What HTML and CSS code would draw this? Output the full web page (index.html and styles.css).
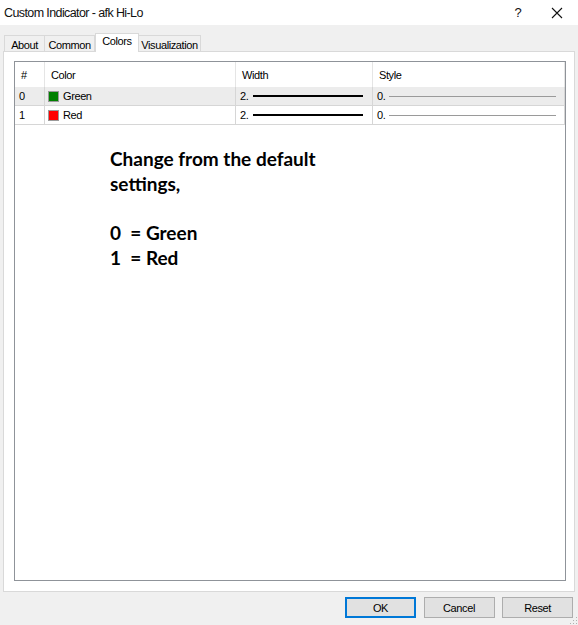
FILE: index.html
```html
<!DOCTYPE html>
<html lang="en">
<head>
    <meta charset="UTF-8">
    <title>Custom Indicator - afk Hi-Lo</title>
    <link rel="stylesheet" href="styles.css">
</head>
<body>
    <div class="window">
        <div class="titlebar">
            <span class="title">Custom Indicator - afk Hi-Lo</span>
            <span class="help">?</span>
            <span class="close">
                <svg width="12" height="12" viewBox="0 0 12 12"><path d="M1 1 L11 11 M11 1 L1 11" stroke="#111" stroke-width="1.1" fill="none"/></svg>
            </span>
        </div>

        <div class="client">
            <div class="tabs">
                <div class="tab tab-about">About</div>
                <div class="tab tab-common">Common</div>
                <div class="tab tab-colors active">Colors</div>
                <div class="tab tab-vis">Visualization</div>
            </div>

            <div class="panel">
                <div class="list">
                    <div class="row head">
                        <div class="cell">#</div>
                        <div class="cell">Color</div>
                        <div class="cell">Width</div>
                        <div class="cell">Style</div>
                    </div>
                    <div class="row selected">
                        <div class="cell num">0</div>
                        <div class="cell color"><span class="swatch green"></span>Green</div>
                        <div class="cell"><span class="val">2.</span><span class="line thick"></span></div>
                        <div class="cell"><span class="val">0.</span><span class="line thin"></span></div>
                    </div>
                    <div class="row">
                        <div class="cell num">1</div>
                        <div class="cell color"><span class="swatch red"></span>Red</div>
                        <div class="cell"><span class="val">2.</span><span class="line thick"></span></div>
                        <div class="cell"><span class="val">0.</span><span class="line thin"></span></div>
                    </div>

                    <div class="note">
                        <p>Change from the default<br>settings,</p>
                        <p class="pre">0  = Green<br>1  = Red</p>
                    </div>
                </div>
            </div>

            <div class="footer">
                <button class="btn default">OK</button>
                <button class="btn">Cancel</button>
                <button class="btn">Reset</button>
            </div>
            <div class="grip"></div>
        </div>
    </div>
</body>
</html>
```

FILE: styles.css
```css
body {
    margin: 0;
    font-family: "Liberation Sans", Arial, sans-serif;
    color: #000;
}

.window {
    width: 578px;
    height: 625px;
    overflow: hidden;
}

/* title bar */
.titlebar {
    height: 25px;
    background-color: #fff;
    display: flex;
    align-items: center;
}

.title {
    flex: 1;
    padding-left: 4px;
    font-size: 12.5px;
    letter-spacing: -0.6px;
    color: #111;
}

.help {
    width: 16px;
    margin-right: 25px;
    font-size: 13px;
    text-align: center;
    color: #111;
}

.close {
    width: 12px;
    height: 12px;
    margin-right: 15px;
    display: flex;
}

/* dialog area */
.client {
    position: relative;
    height: 600px;
    background-color: #f0f0f0;
    padding-top: 8px;
    box-sizing: border-box;
    font-size: 11px;
    letter-spacing: -0.4px;
}

.tabs {
    display: flex;
    align-items: flex-end;
    height: 18px;
    padding-left: 4px;
}

.tab {
    height: 16px;
    box-sizing: border-box;
    border: 1px solid #d9d9d9;
    border-bottom: none;
    border-left: none;
    background-color: #f0f0f0;
    text-align: center;
    line-height: 16px;
    padding-top: 1px;
}

.tab-about {
    width: 41px;
    border-left: 1px solid #d9d9d9;
}

.tab-common {
    width: 50px;
}

.tab-colors {
    width: 44px;
}

.tab-vis {
    width: 62px;
}

.tab.active {
    position: relative;
    z-index: 1;
    height: 19px;
    margin-bottom: -1px;
    border-left: 1px solid #d9d9d9;
    background-color: #fff;
    line-height: 15px;
    padding-top: 0;
}

.panel {
    margin-left: 3px;
    width: 572px;
    height: 541px;
    box-sizing: border-box;
    border: 1px solid #d9d9d9;
    background-color: #fff;
    padding: 9px 8px 10px 10px;
}

.list {
    height: 520px;
    box-sizing: border-box;
    border: 1px solid #8f9399;
    background-color: #fff;
}

.row {
    display: grid;
    grid-template-columns: 30px 191px 137px 192px;
    height: 19px;
    border-bottom: 1px solid #d6d6d6;
    box-sizing: border-box;
}

.row.head {
    height: 25px;
    border-bottom: none;
}

.row.selected {
    background-color: #ececec;
}

.cell {
    display: flex;
    align-items: center;
    border-right: 1px solid #d6d6d6;
    padding-left: 5px;
    overflow: hidden;
}

.head .cell {
    border-right-color: #e5e5e5;
    padding-left: 6px;
}

.cell.num {
    padding-left: 4px;
}

.cell.color {
    padding-left: 3px;
}

.swatch {
    width: 9px;
    height: 9px;
    border: 1px solid #9a9a9a;
    margin-right: 4px;
}

.swatch.green {
    background-color: #008000;
}

.swatch.red {
    background-color: #ff0000;
}

.val {
    width: 12px;
    margin-left: -1px;
}

.line {
    display: block;
}

.line.thick {
    width: 110px;
    height: 2px;
    margin-left: 1px;
    background-color: #000;
}

.line.thin {
    width: 167px;
    height: 1px;
    background-color: #9a9a9a;
}

/* pasted note */
.note {
    padding: 22px 0 0 95px;
    font-family: Lato, "Liberation Sans", sans-serif;
    font-weight: 700;
    font-size: 19px;
    line-height: 24.75px;
    letter-spacing: 0;
    color: #000;
}

.note p {
    margin: 0 0 24.75px 0;
}

.note .pre {
    white-space: pre;
}

/* buttons */
.footer {
    display: flex;
    justify-content: flex-end;
    gap: 7.5px;
    padding: 5px 5px 0 0;
}

.btn {
    width: 71px;
    height: 21px;
    padding: 0;
    font-family: "Liberation Sans", Arial, sans-serif;
    font-size: 11px;
    letter-spacing: -0.4px;
    color: #000;
    background-color: #e1e1e1;
    border: 1px solid #adadad;
}

.btn.default {
    border: 2px solid #0078d7;
}

.grip {
    position: absolute;
    right: 1px;
    bottom: 1px;
    width: 8px;
    height: 8px;
    background-image: radial-gradient(circle, #b0b0b0 0.8px, transparent 1px);
    background-size: 3px 3px;
    clip-path: polygon(100% 0, 100% 100%, 0 100%);
}
```
